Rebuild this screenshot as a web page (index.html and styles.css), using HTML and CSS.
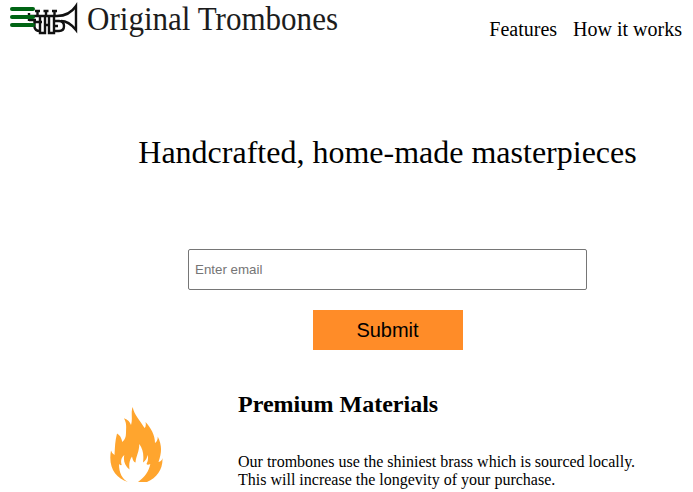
FILE: index.html
```html
<!DOCTYPE html>
<html lang="en">
<head>
<meta charset="utf-8">
<title>Original Trombones</title>
<link rel="stylesheet" href="styles.css">
</head>
<body>
<header class="header">
  <svg class="logo" width="340" height="44" viewBox="0 0 340 44" role="img" aria-label="Original Trombones">
    <g class="horn">
      <path d="M29 13V21M29 16H57C66 16 72 12 76 6V30C72 25 68 21 61 21"/>
      <path d="M35 11H40M43.500 11H48.500M52 11H57M37.500 11V16M46 11V16M54.500 11V16"/>
      <path d="M29 20H36M42 22H34.500V27Q35 31 40 31"/>
      <path d="M40 17V33H45V17M49 17V33H54V17M45 25H49"/>
      <path d="M54 21H59Q64 21 64 26T59 31H54M54 26H58"/>
    </g>
    <text class="logo-text" x="87" y="30" textLength="251" lengthAdjust="spacingAndGlyphs">Original Trombones</text>
  </svg>
  <div class="menu-icon"><i></i><i></i><i></i></div>
  <nav class="nav"><a>Features</a><a>How it works</a></nav>
</header>
<main class="content">
  <h1 class="hero">Handcrafted, home-made masterpieces</h1>
  <form class="form">
    <input class="email" type="email" placeholder="Enter email">
    <button class="submit" type="button">Submit</button>
  </form>
  <section class="feature">
    <svg class="flame" width="54" height="75" viewBox="0 0 54 75">
      <path d="M22.700 0C24 8 30 13 34.500 21Q36.500 19 35.500 15C41 21 45 28 45 36Q48 34 47.700 29.500C52 38 52 45 48.500 55Q52 54 52.500 51C53 62 47 71 37 75H28C35 70 39 64 40.300 57Q37.500 58.500 36.500 57Q39 52 37.500 48Q37 53 33 55.500C34 48 33 42 29.300 37C29.300 45 26 49 25.500 55.500Q23 55 22 49.500C19 54 19 58 19.500 62.500C15 59 13 54 14.300 48C11 51 10.500 54 11.700 58Q10 58.500 9 57C9 66 12 72 18 75C5 71-2 60 1 43.500Q2 47 4.500 48C5 40 5 34 7 26.500C10 28 11.500 31 12.300 35Q16 32 16 26C16 20 17 17 14 11.300C18 13 20 15 21 18C23 11 20.500 6 22.700 0Z"/>
    </svg>
    <div>
      <h2 class="title">Premium Materials</h2>
      <p class="description">Our trombones use the shiniest brass which is sourced locally.<br>This will increase the longevity of your purchase.</p>
    </div>
  </section>
</main>
</body>
</html>
```
FILE: styles.css
```css
* { box-sizing: border-box; }
body {
  margin: 0;
  overflow: hidden;
  font-family: "Liberation Serif", serif;
  color: #000;
  background: #fff;
}
.header {
  position: relative;
  display: flex;
  justify-content: space-between;
  height: 60px;
  padding-right: 11px;
}
.logo { display: block; overflow: visible; }
.horn { fill: none; stroke: #111; stroke-width: 2.4; }
.logo-text { font-size: 34px; fill: #1c1c1c; }
.menu-icon {
  position: absolute;
  left: 10px;
  top: 7px;
  display: grid;
  gap: 4px;
}
.menu-icon i { width: 25px; height: 4px; border-radius: 2px; background: #006414; }
.nav { display: flex; gap: 16px; padding-top: 18px; font-size: 20px; line-height: 23px; }
.content { padding-left: 82px; }
.hero { margin: 74px 0 0; font-size: 32px; font-weight: 400; line-height: 37px; text-align: center; }
.form { display: flex; flex-direction: column; align-items: center; gap: 20px; margin-top: 78px; }
.email {
  width: 399px;
  height: 41px;
  padding: 1px 6px;
  border: 1px solid #767676;
  border-radius: 2px;
  font: 13.333px "Liberation Sans", sans-serif;
}
.email::placeholder { color: #757575; }
.submit {
  width: 150px;
  height: 40px;
  padding: 0;
  border: 0;
  background: #ff8c28;
  color: #000;
  font: 20px "Liberation Sans", sans-serif;
}
.feature { display: flex; gap: 74px; padding-left: 28px; margin-top: 40px; }
.flame { flex: none; margin-top: 17px; fill: #ffa52e; }
.title { margin: 0; font-size: 24px; line-height: 28px; }
.description { margin: 35px 0 0; font-size: 16px; line-height: 18px; white-space: nowrap; }
```
